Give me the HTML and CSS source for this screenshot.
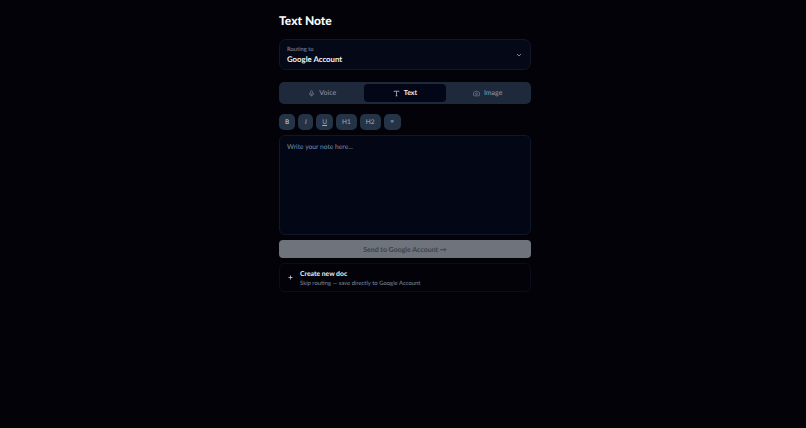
FILE: index.html
```html
<!DOCTYPE html>
<html lang="en">
<head>
<meta charset="utf-8">
<title>Text Note</title>
<link rel="stylesheet" href="styles.css">
</head>
<body>
<main class="page">
  <h1 class="title">Text Note</h1>
  <div class="route">
    <div class="route-text">
      <span class="route-label">Routing to</span>
      <span class="route-name">Google Account</span>
    </div>
    <svg class="chev" viewBox="0 0 24 24"><path d="M6 9l6 6 6-6"/></svg>
  </div>
  <div class="tabs">
    <div class="tab">
      <svg class="ico" viewBox="0 0 24 24"><rect x="9" y="2" width="6" height="13" rx="3"/><path d="M5 10v2a7 7 0 0 0 14 0v-2M12 19v3"/></svg>
      <span>Voice</span>
    </div>
    <div class="tab active">
      <svg class="ico" viewBox="0 0 24 24"><path d="M4 7V4h16v3M9 20h6M12 4v16"/></svg>
      <span>Text</span>
    </div>
    <div class="tab">
      <svg class="ico" viewBox="0 0 24 24"><path d="M14.5 4h-5L7 7H4a2 2 0 0 0-2 2v9a2 2 0 0 0 2 2h16a2 2 0 0 0 2-2V9a2 2 0 0 0-2-2h-3z"/><circle cx="12" cy="13" r="3"/></svg>
      <span>Image</span>
    </div>
  </div>
  <div class="toolbar">
    <span class="fmt b">B</span>
    <span class="fmt i">I</span>
    <span class="fmt u">U</span>
    <span class="fmt">H1</span>
    <span class="fmt">H2</span>
    <span class="fmt list">≡</span>
  </div>
  <div class="editor">Write your note here...</div>
  <div class="send">Send to Google Account →</div>
  <div class="create">
    <svg class="plus" viewBox="0 0 24 24"><path d="M12 5v14M5 12h14"/></svg>
    <div class="create-text">
      <span class="create-name">Create new doc</span>
      <span class="create-sub">Skip routing — save directly to Google Account</span>
    </div>
  </div>
</main>
</body>
</html>
```
FILE: styles.css
```css
* { box-sizing: border-box; }
html, body { margin: 0; height: 100%; }
body {
  background: #020208;
  color: #f1f5f9;
  font-family: "Lato", "Inter", sans-serif;
  text-rendering: geometricPrecision;
  overflow: hidden;
}
.page {
  width: 252px;
  margin-left: 279px;
  padding-top: 13px;
  display: flex;
  flex-direction: column;
}
.title {
  margin: 0;
  font-size: 12px;
  line-height: 16px;
  font-weight: 900;
  color: #f8fafc;
}
.route {
  margin-top: 10px;
  height: 31px;
  padding: 0 7px;
  border: 1px solid #10172a;
  border-radius: 7px;
  background: #050816;
  display: flex;
  align-items: center;
  justify-content: space-between;
}
.route-text { display: flex; flex-direction: column; padding-top: 1px; }
.route-label { font-size: 5.8px; line-height: 9px; color: #8b95a7; }
.route-name { font-size: 7.8px; line-height: 11px; font-weight: 700; color: #eef2f7; }
.chev { width: 8px; height: 8px; fill: none; stroke: #94a3b8; stroke-width: 2.4; }
.tabs {
  margin-top: 12px;
  height: 22px;
  padding: 2px;
  border-radius: 5px;
  background: #1e293b;
  display: grid;
  grid-template-columns: 1fr 1fr 1fr;
}
.tab {
  display: flex;
  align-items: center;
  justify-content: center;
  gap: 4px;
  border-radius: 4px;
  font-size: 7px;
  color: #8592a6;
  font-weight: 500;
}
.tab.active { background: #020617; color: #f1f5f9; font-weight: 700; }
.ico { width: 7px; height: 7px; fill: none; stroke: currentColor; stroke-width: 2; }
.toolbar { margin-top: 10px; display: flex; gap: 3px; }
.fmt {
  height: 16px;
  padding: 0 6px;
  min-width: 15px;
  border-radius: 5px;
  background: #253347;
  color: #a3b0c2;
  font-size: 6.5px;
  display: flex;
  align-items: center;
  justify-content: center;
}
.fmt.b { font-weight: 700; }
.fmt.i { font-style: italic; }
.fmt.u { text-decoration: underline; }
.fmt.list { min-width: 17px; }
.editor {
  margin-top: 5px;
  height: 100px;
  padding: 7px;
  border: 1px solid #10172a;
  border-radius: 6px;
  background: #030614;
  color: #858fa0;
  font-size: 6.7px;
  line-height: 9px;
}
.send {
  margin-top: 5px;
  height: 18px;
  padding-top: 1px;
  border-radius: 4px;
  background: #6f737b;
  color: #3a4250;
  font-size: 7px;
  font-weight: 700;
  display: flex;
  align-items: center;
  justify-content: center;
}
.create {
  margin-top: 5px;
  height: 29px;
  padding: 0 7px;
  border: 1px solid #0a0e1a;
  border-radius: 6px;
  display: flex;
  align-items: center;
  gap: 6px;
}
.plus { width: 7px; height: 7px; fill: none; stroke: #e2e8f0; stroke-width: 2.4; }
.create-text { display: flex; flex-direction: column; padding-top: 2px; }
.create-name { font-size: 6.8px; line-height: 10px; font-weight: 700; color: #f1f5f9; }
.create-sub { font-size: 5.9px; line-height: 9px; color: #7f8ea3; }
```
